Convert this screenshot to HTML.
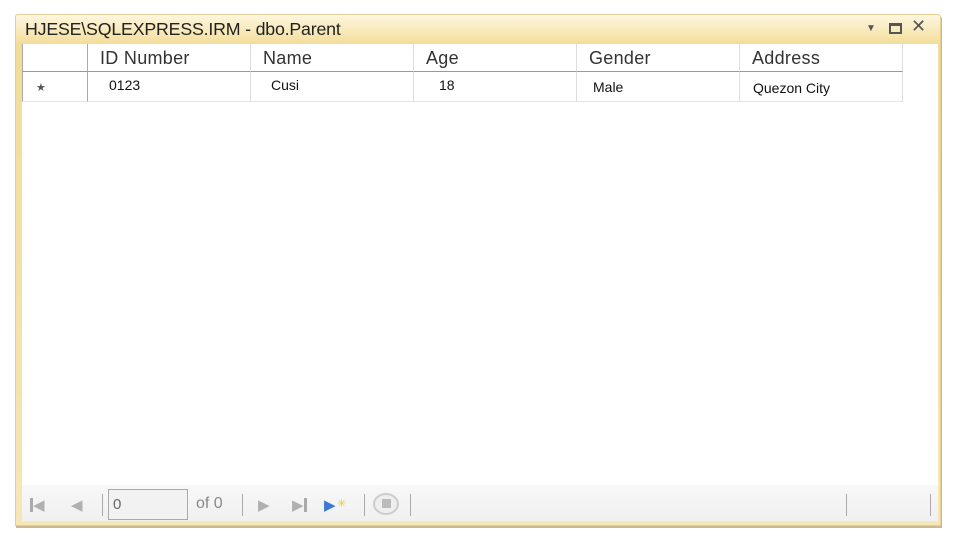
<!DOCTYPE html>
<html><head><meta charset="utf-8"><style>
*{margin:0;padding:0;box-sizing:border-box}
body{width:960px;height:540px;background:#fff;position:relative;overflow:hidden;font-family:"Liberation Sans",sans-serif}
.win{position:absolute;left:15px;top:14px;width:926px;height:512px;background:linear-gradient(#fdf6df,#f7e6b0 20px,#f3dc98 30px,#f6e6b8);border:1px solid #e2cf95;border-radius:3px 3px 0 0;box-shadow:1px 2px 0 #c8b98f}
.title{position:absolute;left:9px;top:4px;font-size:17.8px;color:#222;letter-spacing:-0.2px}
.ctrl{position:absolute;top:4px;font-size:15px;color:#555}
.body{position:absolute;left:6px;top:29px;width:916px;height:441px;background:#fff}
.h{position:absolute;top:0;height:28px;border-bottom:1px solid #999;border-right:1px solid #ddd;font-size:18px;letter-spacing:0.3px;color:#333;padding:4px 0 0 12px}
.r{position:absolute;top:28px;height:30px;border-bottom:1px solid #e4e4e4;border-right:1px solid #ddd;font-size:14px;color:#111}
.tb{position:absolute;left:6px;top:470px;width:916px;height:36px;background:linear-gradient(#f8f8f8,#f0f0f0)}
.sep{position:absolute;top:9px;width:1px;height:22px;background:#aaa}
.ic{position:absolute;top:11px;color:#b0b0b0;font-size:15px}
</style></head><body>
<div class="win">
<div class="title">HJESE\SQLEXPRESS.IRM - dbo.Parent</div>
<div class="ctrl" style="left:850px;font-size:10px;top:8px">▼</div>
<div style="position:absolute;left:873px;top:8px;width:13px;height:11px;border:2px solid #555;border-top-width:3px"></div>
<div class="ctrl" style="left:895px;top:1px;font-size:18px">✕</div>
<div class="body">
 <div class="h" style="left:0;width:66px;border-left:1px solid #aaa;border-right:1px solid #aaa"></div>
 <div class="h" style="left:66px;width:163px">ID Number</div>
 <div class="h" style="left:229px;width:163px">Name</div>
 <div class="h" style="left:392px;width:163px">Age</div>
 <div class="h" style="left:555px;width:163px">Gender</div>
 <div class="h" style="left:718px;width:163px">Address</div>
 <div class="r" style="left:0;width:66px;border-left:1px solid #aaa;border-right:1px solid #aaa;font-size:11px;color:#555;padding:9px 0 0 13px">★</div>
 <div class="r" style="left:66px;width:163px;padding:5px 0 0 21px">0123</div>
 <div class="r" style="left:229px;width:163px;padding:5px 0 0 20px">Cusi</div>
 <div class="r" style="left:392px;width:163px;padding:5px 0 0 25px">18</div>
 <div class="r" style="left:555px;width:163px;padding:7px 0 0 16px">Male</div>
 <div class="r" style="left:718px;width:163px;padding:8px 0 0 13px">Quezon City</div>
</div>
<div class="tb">
 <div class="ic" style="left:8px"><span style="display:inline-block;width:3px;height:14px;background:#aaa;vertical-align:-2px"></span>◀</div>
 <div class="ic" style="left:49px">◀</div>
 <div class="sep" style="left:80px"></div>
 <div style="position:absolute;left:86px;top:4px;width:80px;height:31px;border:1px solid #aaa;background:#f2f2f2;font-size:15px;color:#666;padding:6px 0 0 4px">0</div>
 <div style="position:absolute;left:174px;top:10px;font-size:16px;color:#888">of 0</div>
 <div class="sep" style="left:220px"></div>
 <div class="ic" style="left:236px">▶</div>
 <div class="ic" style="left:270px">▶<span style="display:inline-block;width:3px;height:14px;background:#aaa;vertical-align:-2px"></span></div>
 <div class="ic" style="left:302px;color:#3a7bd5">▶</div>
 <div style="position:absolute;left:315px;top:12px;color:#e8c93a;font-size:11px">✳</div>
 <div class="sep" style="left:342px"></div>
 <div style="position:absolute;left:351px;top:8px;width:26px;height:22px;border-radius:50%;border:2px solid #ccc;background:#eee"><div style="width:9px;height:9px;background:#bbb;margin:4px auto"></div></div>
 <div class="sep" style="left:388px"></div>
 <div class="sep" style="left:824px"></div>
 <div class="sep" style="left:908px"></div>
</div>
</div>
</body></html>
